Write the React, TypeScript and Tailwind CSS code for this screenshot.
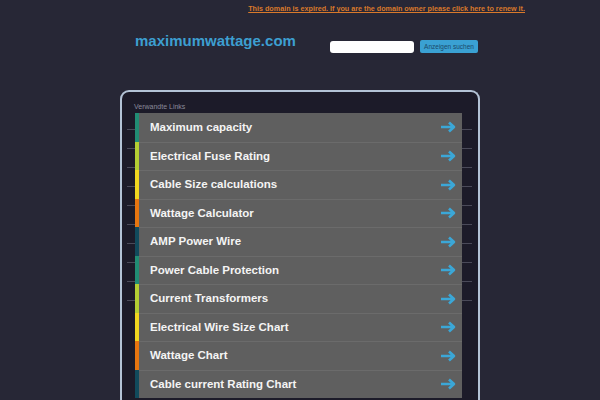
import React from 'react';

const links = [
  { label: 'Maximum capacity', color: 'bg-[#218c74]' },
  { label: 'Electrical Fuse Rating', color: 'bg-[#b3ce33]' },
  { label: 'Cable Size calculations', color: 'bg-[#f0d61f]' },
  { label: 'Wattage Calculator', color: 'bg-[#e7750f]' },
  { label: 'AMP Power Wire', color: 'bg-[#114a5c]' },
  { label: 'Power Cable Protection', color: 'bg-[#218c74]' },
  { label: 'Current Transformers', color: 'bg-[#b3ce33]' },
  { label: 'Electrical Wire Size Chart', color: 'bg-[#f0d61f]' },
  { label: 'Wattage Chart', color: 'bg-[#e7750f]' },
  { label: 'Cable current Rating Chart', color: 'bg-[#114a5c]' },
];

const ticks = Array.from({ length: 10 });

function Arrow() {
  return (
    <svg width="16" height="12" viewBox="0 0 16 12" fill="none">
      <path d="M1 6H14M9 1.5L14 6L9 10.5" stroke="#3ba7d7" strokeWidth="2.6" strokeLinejoin="round" />
    </svg>
  );
}

export default function App() {
  return (
    <div className="h-[400px] overflow-hidden bg-[#272736]" style={{ fontFamily: '"Liberation Sans", Arial, sans-serif' }}>
      {/* top notice */}
      <div className="flex justify-end pr-[75px] pt-[4px] h-[20px]">
        <a href="#" className="text-[7.2px] leading-[9px] font-bold text-[#d9792b] underline">
          This domain is expired. If you are the domain owner please click here to renew it.
        </a>
      </div>

      {/* header */}
      <div className="w-[360px] mx-auto flex items-start h-[69.5px]">
        <div className="pl-[15px] pt-[11.5px] text-[15px] leading-[17px] font-bold text-[#3d9fd1]">maximumwattage.com</div>
        <div className="ml-auto flex items-start pt-[20.5px] pr-[2px]">
          <input className="w-[84px] h-[12px] bg-white rounded-[3px] outline-none" />
          <button className="ml-[6px] mt-[-0.5px] w-[58px] h-[13px] bg-[#3aa1d3] rounded-[2px] text-[6.5px] leading-[13px] text-[#1a4a6a]">
            Anzeigen suchen
          </button>
        </div>
      </div>

      {/* panel */}
      <div className="w-[360px] mx-auto border-2 border-b-0 border-[#b3c3d6] rounded-t-[9px] bg-[#1c1b29] h-[400px]">
        <div className="pl-[12px] pt-[10px] text-[7px] leading-[9px] text-[#8a8a9a]">Verwandte Links</div>
        <div className="flex mt-[2.5px]">
          <div className="w-[13px] flex flex-col items-end pt-[16px]">
            {ticks.map((_, i) => (
              <div key={i} className="w-[8px] h-[1px] bg-[#4a4a59] mb-[18px]" />
            ))}
          </div>
          <div className="w-[327px] flex flex-col">
            {links.map((l, i) => (
              <div key={l.label} className="flex h-[28.5px]">
                <div className={`w-[4px] ${l.color}`} />
                <div className={`flex-1 flex items-center bg-[#5f5f5f] pl-[11px] pr-[6px] ${i > 0 ? 'border-t border-[#6b6b6b]' : ''}`}>
                  <span className="text-[11.5px] font-bold text-[#f4f4f4]">{l.label}</span>
                  <span className="ml-auto flex"><Arrow /></span>
                </div>
              </div>
            ))}
          </div>
          <div className="w-[16px] flex flex-col pt-[16px]">
            {ticks.map((_, i) => (
              <div key={i} className="w-[10px] h-[1px] bg-[#4a4a59] mb-[18px]" />
            ))}
          </div>
        </div>
      </div>
    </div>
  );
}
